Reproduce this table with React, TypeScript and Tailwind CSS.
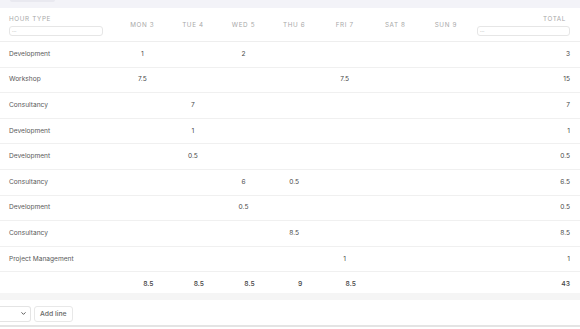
import { ChevronDown } from "lucide-react";

const days = ["MON 3", "TUE 4", "WED 5", "THU 6", "FRI 7", "SAT 8", "SUN 9"];

type Line = { type: string; hours: (string | null)[]; total: string };

const lines: Line[] = [
  { type: "Development", hours: ["1", null, "2", null, null, null, null], total: "3" },
  { type: "Workshop", hours: ["7.5", null, null, null, "7.5", null, null], total: "15" },
  { type: "Consultancy", hours: [null, "7", null, null, null, null, null], total: "7" },
  { type: "Development", hours: [null, "1", null, null, null, null, null], total: "1" },
  { type: "Development", hours: [null, "0.5", null, null, null, null, null], total: "0.5" },
  { type: "Consultancy", hours: [null, null, "6", "0.5", null, null, null], total: "6.5" },
  { type: "Development", hours: [null, null, "0.5", null, null, null, null], total: "0.5" },
  { type: "Consultancy", hours: [null, null, null, "8.5", null, null, null], total: "8.5" },
  { type: "Project Management", hours: [null, null, null, null, "1", null, null], total: "1" },
];

const totals = ["8.5", "8.5", "8.5", "9", "8.5", "", ""];

const cols = "grid grid-cols-[117px_repeat(7,50.6px)_1fr]";

export default function App() {
  return (
    <div className="w-[580px] h-[329px] overflow-hidden bg-white font-['Inter',sans-serif]">
      <div className="h-[8px] bg-[#f3f3f8] relative">
        <div className="absolute left-[10px] top-0 w-[45px] h-[2px] rounded-b bg-[#e9e9f0]" />
      </div>

      <div className="bg-white shadow-[0_2px_4px_rgba(0,0,0,0.07)]">
        <div className={`${cols} h-[34px] border-b border-[#eeeeee]`}>
          <div className="pl-[9px] pt-[7px]">
            <div className="text-[6.3px] leading-[8px] tracking-[0.1em] text-[#a8a8a8]">HOUR TYPE</div>
            <div className="mt-[3px] w-[94px] h-[10px] rounded-[3px] border border-[#e6e6e6] text-[5px] leading-[7px] pl-[2px] text-[#bbb]">
              ...
            </div>
          </div>
          {days.map((d) => (
            <div
              key={d}
              className="flex items-center justify-center pt-[3px] text-[6.3px] tracking-[0.1em] text-[#a8a8a8]"
            >
              {d}
            </div>
          ))}
          <div className="pr-[10px] pt-[7px] flex flex-col items-end">
            <div className="pr-[4px] text-[6.3px] leading-[8px] tracking-[0.1em] text-[#a8a8a8]">TOTAL</div>
            <div className="mt-[3px] w-[93px] h-[10px] rounded-[3px] border border-[#e6e6e6] text-[5px] leading-[7px] pl-[2px] text-[#bbb]">
              ...
            </div>
          </div>
        </div>

        {lines.map((l, i) => (
          <div
            key={i}
            className={`${cols} h-[25.6px] pt-[1px] border-b border-[#f0f0f0] text-[6.6px] text-[#5a5a5a]`}
          >
            <div className="pl-[9px] flex items-center">{l.type}</div>
            {l.hours.map((h, j) => (
              <div key={j} className="flex items-center justify-center text-[#484848]">
                {h}
              </div>
            ))}
            <div className="pr-[10px] flex items-center justify-end text-[#484848]">{l.total}</div>
          </div>
        ))}

        <div className={`${cols} h-[21px] pt-[2px] text-[6.8px] font-medium text-[#444]`}>
          <div />
          {totals.map((t, j) => (
            <div key={j} className="flex items-center justify-center pl-[12px]">
              {t}
            </div>
          ))}
          <div className="pr-[10px] flex items-center justify-end">43</div>
        </div>
      </div>

      <div className="h-[7px] bg-[#f5f5f5]" />

      <div className="h-[27px] flex items-center gap-[3px] border-b-2 border-[#e4e4e4] pt-[2px]">
        <div className="w-[31px] h-[16px] rounded-r-[3px] border border-l-0 border-[#e4e4e4] flex items-center justify-end pr-[3px]">
          <ChevronDown className="w-[7px] h-[7px] text-[#444]" strokeWidth={3} />
        </div>
        <button className="h-[16px] px-[5px] rounded-[3px] border border-[#e8e8e8] text-[6.8px] font-medium text-[#666]">
          Add line
        </button>
      </div>
    </div>
  );
}
